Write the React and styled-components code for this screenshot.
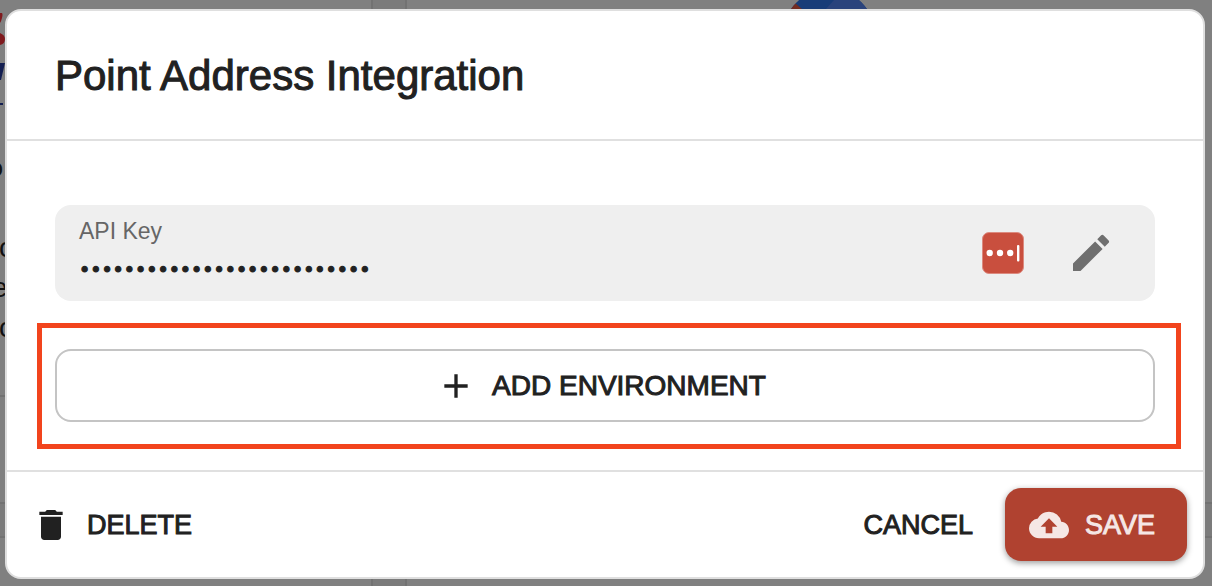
import React from "react";
import styled, { createGlobalStyle } from "styled-components";
import { MdAdd, MdCloudUpload, MdDelete, MdEdit } from "react-icons/md";

const GlobalStyle = createGlobalStyle`
  * {
    box-sizing: border-box;
  }

  body {
    margin: 0;
    background: #7b7b7b;
    color: #212121;
    font-family: "Liberation Sans", Arial, sans-serif;
    overflow: hidden;
  }

  button, input {
    font-family: inherit;
  }
`;

const Page = styled.div`
  display: grid;
  min-height: 100vh;
`;

/* dimmed cards behind the dialog */
const Backdrop = styled.div`
  grid-area: 1 / 1;
  display: grid;
  grid-template-columns: 373px 1fr;
  grid-template-rows: 504px 1fr;
  gap: 32px;
  height: 100vh;
  overflow: hidden;
`;

const Card = styled.div`
  background: #808080;
  border: 2px solid #727272;
  border-width: ${({ $edges }) => $edges};
  overflow: hidden;
`;

const CardBody = styled.div`
  height: 397px;
  border-bottom: 2px solid #727272;
`;

const Mark = styled.svg`
  display: block;
`;

const CardTitle = styled.h3`
  margin: 0 0 20px -14px;
  font-size: 28px;
  line-height: 80px;
  color: #111;
`;

const CardText = styled.p`
  margin: 0;
  margin-left: ${({ $cut }) => ($cut ? "-8px" : "-1px")};
  font-size: 28px;
  line-height: 40px;
  color: #111;
`;

const Dialog = styled.form`
  grid-area: 1 / 1;
  z-index: 1;
  display: flex;
  flex-direction: column;
  align-self: start;
  margin: 9px 7px 0 5px;
  background: #fff;
  border: 2px solid #dfdfdf;
  border-radius: 16px;
`;

const Header = styled.header`
  padding: 41px 48px 39px;
  border-bottom: 2px solid #e0e0e0;
`;

const Title = styled.h2`
  margin: 0;
  font-size: 42px;
  font-weight: 400;
  line-height: 48px;
  -webkit-text-stroke: 1px currentColor;
`;

const Content = styled.div`
  padding: 64px 22px 21px 30px;
`;

const Field = styled.div`
  display: flex;
  align-items: flex-start;
  justify-content: space-between;
  height: 96px;
  margin: 0 26px 22px 18px;
  padding: 10px 40px 0 24px;
  background: #efefef;
  border-radius: 16px;
`;

const FieldText = styled.div`
  flex: 1;
  display: flex;
  flex-direction: column;
  gap: 2px;
`;

const FieldLabel = styled.label`
  font-size: 23px;
  line-height: 32px;
  color: #666;
`;

const FieldInput = styled.input`
  width: 100%;
  height: 40px;
  padding: 0;
  border: 0;
  outline: 0;
  background: transparent;
  color: #212121;
  font-family: "DejaVu Sans", sans-serif;
  font-size: 19px;
  -webkit-text-stroke: 1px currentColor;
`;

const FieldActions = styled.div`
  display: flex;
  align-items: center;
  align-self: stretch;
  gap: 43px;
  padding-bottom: 10px;
`;

const IconButton = styled.button`
  display: flex;
  padding: 0;
  border: 0;
  background: none;
  color: #6f6f6f;
  cursor: pointer;
`;

const Highlight = styled.div`
  padding: 21px 21px 22px 13px;
  border: 5px solid #f2441d;
`;

const Button = styled.button`
  display: flex;
  align-items: center;
  justify-content: center;
  gap: 16px;
  height: 73px;
  padding: 0 32px;
  border: 0;
  border-radius: 16px;
  background: none;
  color: #212121;
  font-size: 27px;
  line-height: 32px;
  text-transform: uppercase;
  -webkit-text-stroke: 1px currentColor;
  cursor: pointer;

  svg {
    -webkit-text-stroke: 0;
  }
`;

const AddButton = styled(Button)`
  width: 100%;
  padding: 0 40px 0 32px;
  border: 2px solid #c4c4c4;
  font-size: 28px;
`;

const SaveButton = styled(Button)`
  padding: 0 32px 0 24px;
  background: #b04230;
  color: #f5e7e5;
  box-shadow: 0 2px 6px rgba(0, 0, 0, 0.4);
`;

const DeleteButton = styled(Button)`
  padding: 0 8px;
`;

const Footer = styled.footer`
  display: flex;
  align-items: center;
  justify-content: space-between;
  padding: 16px;
  border-top: 2px solid #e0e0e0;
`;

const FooterGroup = styled.div`
  display: flex;
`;

const PasswordManagerIcon = () => (
  <svg width="42" height="42" viewBox="0 0 42 42" aria-hidden="true">
    <rect x="0.5" y="0.5" width="41" height="41" rx="6.5" fill="#c94f3e" stroke="#dc8a7f" />
    <circle cx="7.7" cy="21" r="3.2" fill="#fff" />
    <circle cx="18" cy="21" r="3.2" fill="#fff" />
    <circle cx="28.2" cy="21" r="3.2" fill="#fff" />
    <rect x="35" y="13" width="2.4" height="16.5" rx="1" fill="#fff" />
  </svg>
);

const App = () => {
  return (
    <>
      <GlobalStyle />
      <Page>
        <Backdrop aria-hidden="true">
          <Card $edges="0 2px 2px 0">
            <CardBody>
              <Mark width="8" height="128" viewBox="0 0 8 128">
                <path d="M0 13H2Q3 14 2 18Q1 22 0 23ZM0 33Q5 35 5 39Q5 44 0 45Z" fill="#7f1a1e" />
                <path d="M0 63H5L1 80H0Z" fill="#141f52" />
                <path d="M0 103H3V105H0Z" fill="#141f52" />
              </Mark>
              <CardTitle>o</CardTitle>
              <CardText>c</CardText>
              <CardText $cut>e</CardText>
              <CardText>c</CardText>
            </CardBody>
          </Card>
          <Card $edges="0 0 2px 2px">
            <Mark width="805" height="40" viewBox="0 0 805 40">
              <clipPath id="disc">
                <circle cx="422" cy="35" r="46" />
              </clipPath>
              <g clipPath="url(#disc)">
                <path d="M370 0H470V40H370Z" fill="#183c78" />
                <path d="M418 10L427 0H470V40H418Z" fill="#2a437c" />
                <path d="M380 10V3H388L396 10Z" fill="#742d22" />
              </g>
            </Mark>
          </Card>
          <Card $edges="2px 2px 0 0" />
          <Card $edges="2px 0 0 2px" />
        </Backdrop>

        <Dialog onSubmit={(e) => e.preventDefault()}>
          <Header>
            <Title>Point Address Integration</Title>
          </Header>

          <Content>
            <Field>
              <FieldText>
                <FieldLabel htmlFor="apiKey">API Key</FieldLabel>
                <FieldInput
                  id="apiKey"
                  type="password"
                  autoComplete="off"
                  defaultValue="abcdefghijklmnopqrstuvwxyz"
                />
              </FieldText>
              <FieldActions>
                <PasswordManagerIcon />
                <IconButton type="button" aria-label="Edit API key">
                  <MdEdit size={48} />
                </IconButton>
              </FieldActions>
            </Field>

            <Highlight>
              <AddButton type="button">
                <MdAdd size={40} />
                Add Environment
              </AddButton>
            </Highlight>
          </Content>

          <Footer>
            <DeleteButton type="button">
              <MdDelete size={40} />
              Delete
            </DeleteButton>
            <FooterGroup>
              <Button type="button">Cancel</Button>
              <SaveButton type="submit">
                <MdCloudUpload size={40} />
                Save
              </SaveButton>
            </FooterGroup>
          </Footer>
        </Dialog>
      </Page>
    </>
  );
};

export default App;
